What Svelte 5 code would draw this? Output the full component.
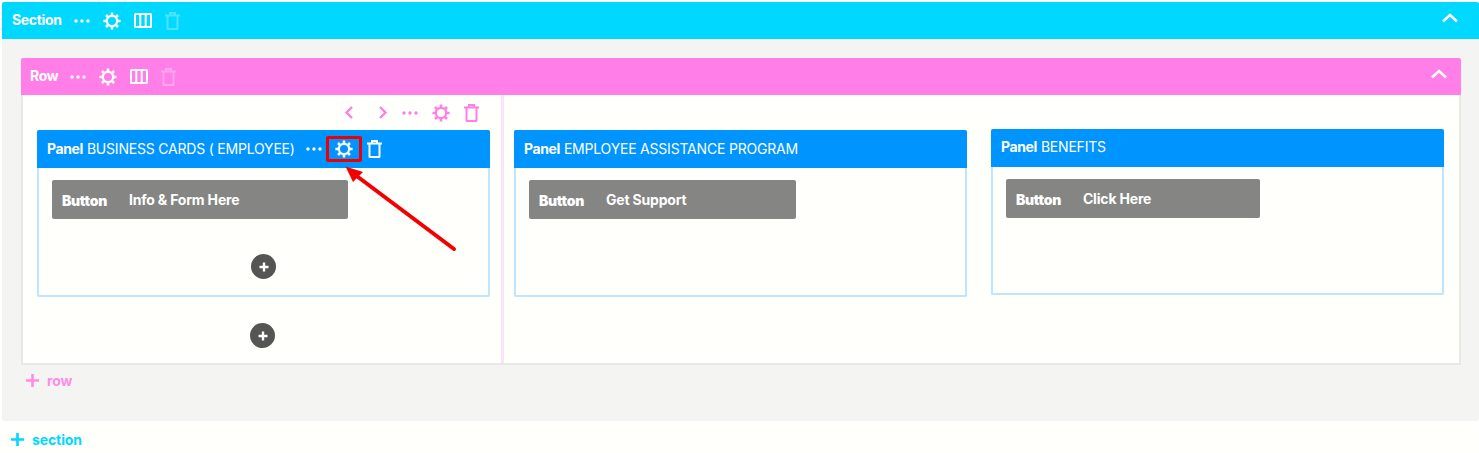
<script>
	const panels = [
		{ title: 'BUSINESS CARDS ( EMPLOYEE)', button: 'Info & Form Here', width: 296, tools: true },
		{ title: 'EMPLOYEE ASSISTANCE PROGRAM', button: 'Get Support', width: 267 },
		{ title: 'BENEFITS', button: 'Click Here', width: 254, raised: true }
	];
</script>

{#snippet dots()}
	<svg class="icon dots" width="16" height="4" viewBox="0 0 16 4"><circle cx="2" cy="2" r="1.7" /><circle cx="8" cy="2" r="1.7" /><circle cx="14" cy="2" r="1.7" /></svg>
{/snippet}

{#snippet gear()}
	<svg class="icon" width="18" height="18" viewBox="0 0 18 18" fill="none" stroke="currentColor">
		<circle cx="9" cy="9" r="5.1" stroke-width="2.2" />
		<path stroke-width="2.6" d="M9 0.4v3M9 14.6v3M0.4 9h3M14.6 9h3M3 3l2 2M13 13l2 2M3 15l2-2M13 5l2-2" />
	</svg>
{/snippet}

{#snippet columns()}
	<svg class="icon" width="18" height="15" viewBox="0 0 18 15" fill="none" stroke="currentColor" stroke-width="2">
		<rect x="1" y="1" width="16" height="13" rx="0.5" />
		<path d="M6.3 1v13M11.7 1v13" />
	</svg>
{/snippet}

{#snippet trash()}
	<svg class="icon" width="15" height="18" viewBox="0 0 15 18" fill="none" stroke="currentColor" stroke-width="2">
		<path d="M2.5 4v12.5a.5.5 0 0 0 .5.5h9a.5.5 0 0 0 .5-.5V4" />
		<path d="M0 3.5h15M5 3V1h5v2" />
	</svg>
{/snippet}

{#snippet chevronUp()}
	<svg class="icon" width="16" height="10" viewBox="0 0 16 10" fill="none" stroke="currentColor" stroke-width="2.6"><path d="M1 8.5l7-6.5 7 6.5" /></svg>
{/snippet}

{#snippet plus()}
	<svg class="icon" width="13" height="13" viewBox="0 0 13 13" fill="none" stroke="currentColor" stroke-width="2.6"><path d="M6.5 0v13M0 6.5h13" /></svg>
{/snippet}

{#snippet addCircle()}
	<span class="add-circle">
		<svg width="10" height="10" viewBox="0 0 10 10" fill="none" stroke="#fff" stroke-width="2.4"><path d="M5 0.5v9M0.5 5h9" /></svg>
	</span>
{/snippet}

<div class="page">
	<section class="section">
		<header class="bar section-bar">
			<strong>Section</strong>
			{@render dots()}
			{@render gear()}
			{@render columns()}
			<span class="faded">{@render trash()}</span>
			<span class="collapse">{@render chevronUp()}</span>
		</header>

		<div class="section-body">
			<div class="row">
				<header class="bar row-bar">
					<strong>Row</strong>
					{@render dots()}
					{@render gear()}
					{@render columns()}
					<span class="faded">{@render trash()}</span>
					<span class="collapse">{@render chevronUp()}</span>
				</header>

				<div class="row-body">
					{#each panels as panel, i}
						<div class="column" class:raised={panel.raised}>
							<div class="column-tools">
								{#if i === 0}
									<svg class="icon" width="10" height="13" viewBox="0 0 10 13" fill="none" stroke="currentColor" stroke-width="2.4"><path d="M8 1L2.5 6.5 8 12" /></svg>
									<svg class="icon next" width="10" height="13" viewBox="0 0 10 13" fill="none" stroke="currentColor" stroke-width="2.4"><path d="M2 1l5.5 5.5L2 12" /></svg>
									{@render dots()}
									{@render gear()}
									{@render trash()}
								{/if}
							</div>

							<div class="panel">
								<header class="panel-bar">
									<strong>Panel</strong>
									<span class="panel-title">{panel.title}</span>
									{#if panel.tools}
										<span class="panel-tools">
											{@render dots()}
											<span class="marked">{@render gear()}</span>
											{@render trash()}
										</span>
									{/if}
								</header>
								<div class="panel-body">
									<div class="button-item" style="width: {panel.width}px">
										<strong>Button</strong>
										<span>{panel.button}</span>
									</div>
									{#if i === 0}
										<div class="panel-add">{@render addCircle()}</div>
									{/if}
								</div>
							</div>

							{#if i === 0}
								<div class="column-add">{@render addCircle()}</div>
							{/if}
						</div>
					{/each}
				</div>
			</div>

			<div class="add-link add-row">{@render plus()}<span>row</span></div>
		</div>
	</section>

	<div class="add-link add-section">{@render plus()}<span>section</span></div>

	<!-- annotation arrow drawn over the screenshot -->
	<svg class="arrow" width="120" height="100" viewBox="0 0 120 100" fill="none">
		<path d="M109 83L13 11" stroke="#f50000" stroke-width="4" stroke-linecap="round" />
		<path d="M0.5 0.5L18 6L8 16Z" fill="#f50000" />
	</svg>
</div>

<style>
	:global(body) {
		background: #fffffb;
	}

	.page {
		position: relative;
		height: 453px;
		overflow: hidden;
		padding: 2px 0 0 2px;
		box-sizing: border-box;
		font-family: Inter, "Liberation Sans", sans-serif;
	}

	.icon {
		display: block;
		flex: none;
	}

	.dots {
		fill: currentColor;
	}

	.bar {
		display: flex;
		align-items: center;
		height: 37px;
		color: #fff;
		font-size: 14px;
		gap: 13px;
		border-radius: 2px 2px 0 0;
	}

	.bar strong {
		font-weight: 700;
		letter-spacing: -0.35px;
		margin-bottom: 2px;
	}

	.section-bar {
		background: #00d8ff;
		padding: 0 21px 0 10px;
	}

	.section-bar strong {
		margin-right: -1px;
	}

	.row-bar {
		background: #ff7ee8;
		padding: 0 14px 0 9px;
	}

	.row-bar strong {
		margin-right: -1px;
	}

	.faded {
		opacity: 0.3;
	}

	.collapse {
		margin-left: auto;
		margin-top: -5px;
	}

	.section-body {
		background: #f4f4f2;
		height: 382px;
		padding: 19px 18px 0 19px;
		box-sizing: border-box;
		border-radius: 0 0 3px 3px;
	}

	.row-body {
		display: grid;
		grid-template-columns: 481px 476px 1fr;
		height: 268px;
		background: #fffffb;
		border: solid #e8e8e4;
		border-width: 0 2px 2px;
	}

	.column {
		padding: 0 11px 0 14px;
		border-right: 3px solid #fde3f8;
		box-sizing: border-box;
	}

	.column:nth-child(2) {
		padding: 0 13px 0 10px;
		border-right: none;
	}

	.column:nth-child(3) {
		padding: 0 15px 0 11px;
		border-right: none;
	}

	.column-tools {
		display: flex;
		align-items: center;
		justify-content: flex-end;
		gap: 14px;
		height: 35px;
		padding: 0 11px 0 0;
		color: #ff7ee8;
		box-sizing: border-box;
	}

	.column-tools .next {
		margin-left: 10px;
	}

	.raised .column-tools {
		height: 34px;
	}

	.panel {
		border: solid #bfe5ff;
		border-width: 0 2px 2px;
		border-radius: 2px;
	}

	.panel-bar {
		display: flex;
		align-items: center;
		gap: 4px;
		height: 38px;
		margin: 0 -2px;
		padding: 0 10px;
		background: #0094ff;
		color: #fff;
		font-size: 14px;
		border-radius: 2px 2px 0 0;
	}

	.panel-bar strong {
		font-weight: 700;
		letter-spacing: -0.4px;
		margin-bottom: 2px;
	}

	.panel-title {
		letter-spacing: -0.2px;
		margin-bottom: 2px;
	}

	.raised .panel-bar strong,
	.raised .panel-title {
		margin-bottom: 4px;
	}

	.panel-tools {
		display: flex;
		align-items: center;
		margin-left: 7px;
		gap: 4px;
	}

	.marked {
		display: flex;
		align-items: center;
		justify-content: center;
		box-sizing: border-box;
		width: 36px;
		height: 26px;
		margin-right: 1px;
		border: 3px solid #ee0000;
		border-radius: 2px;
	}

	.panel-body {
		height: 127px;
		padding: 12px 13px 0;
		box-sizing: border-box;
		background: #fffffb;
	}

	.raised .panel-body {
		height: 126px;
	}

	.button-item {
		display: flex;
		align-items: center;
		gap: 22px;
		height: 39px;
		padding: 0 10px;
		box-sizing: border-box;
		background: #858583;
		color: #fff;
		font-size: 14px;
		font-weight: 700;
		letter-spacing: -0.3px;
		border-radius: 2px;
	}

	.button-item strong {
		margin-top: 1px;
	}

	.button-item span {
		margin-top: -1px;
		letter-spacing: -0.18px;
	}

	.panel-add {
		display: flex;
		justify-content: center;
		margin-top: 35px;
	}

	.column-add {
		display: flex;
		justify-content: center;
		margin-top: 26px;
		padding-right: 2px;
	}

	.add-circle {
		display: flex;
		align-items: center;
		justify-content: center;
		width: 25px;
		height: 25px;
		border-radius: 50%;
		background: #555553;
	}

	.add-link {
		display: flex;
		align-items: center;
		gap: 8px;
		font-size: 14px;
		font-weight: 700;
		letter-spacing: -0.1px;
	}

	.add-row {
		margin: 7px 0 0 5px;
		color: #ff8ce9;
	}

	.add-section {
		margin: 10px 0 0 9px;
		color: #00d8ff;
	}

	.arrow {
		position: absolute;
		left: 345px;
		top: 166px;
	}
</style>
